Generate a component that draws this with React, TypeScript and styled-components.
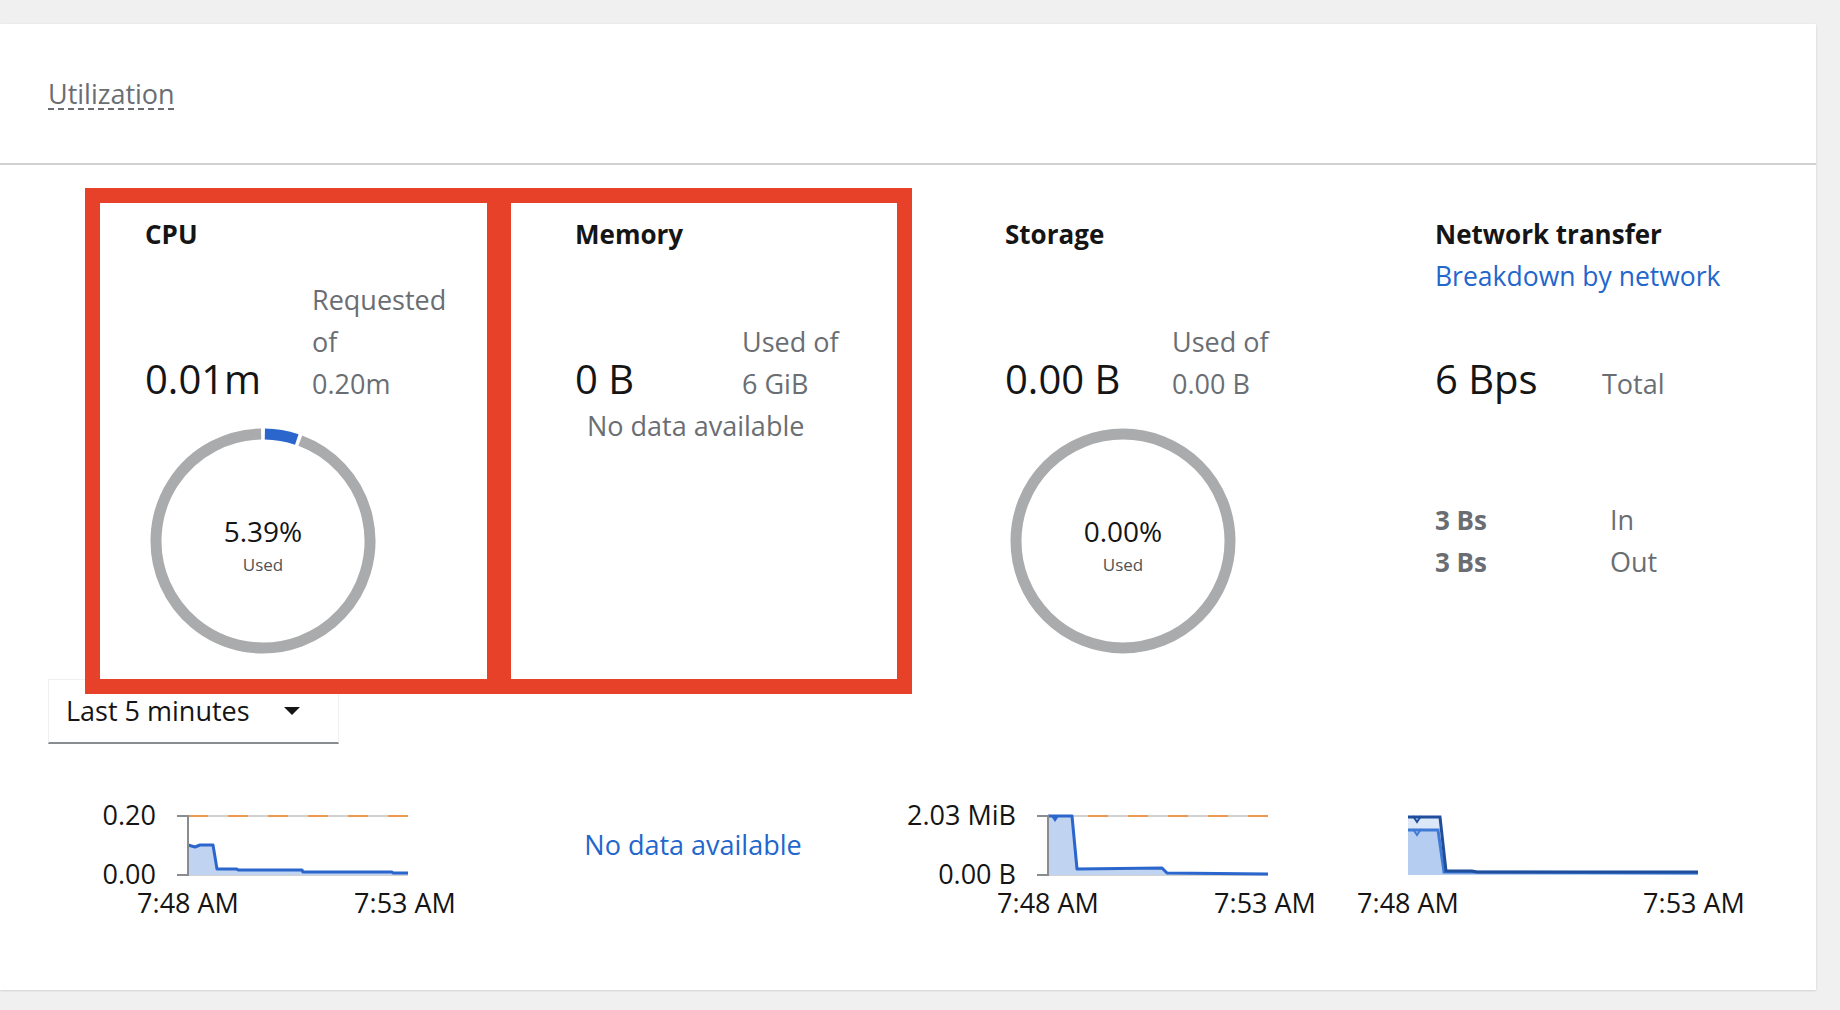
import React from "react";
import styled, { createGlobalStyle } from "styled-components";

const GlobalStyle = createGlobalStyle`
  html, body {
    margin: 0;
    padding: 0;
    background: #f0f0f0;
  }
  body {
    font-family: "Open Sans", "Liberation Sans", sans-serif;
    color: #151515;
  }
`;

const Page = styled.div`
  position: relative;
  width: 1840px;
  height: 1010px;
  padding-top: 24px;
  box-sizing: border-box;
  overflow: hidden;
`;

const Card = styled.section`
  width: 1816px;
  height: 966px;
  background: #fff;
  box-shadow: 0 1px 2px rgba(3, 3, 3, 0.1), 0 0 3px rgba(3, 3, 3, 0.05);
  display: flex;
  flex-direction: column;
`;

const CardHeader = styled.header`
  flex-shrink: 0;
  height: 141px;
  box-sizing: border-box;
  border-bottom: 2px solid #d2d2d2;
  padding-left: 48px;
  display: flex;
  align-items: center;
`;

const CardTitle = styled.span`
  font-size: 27px;
  line-height: 42px;
  color: #6a6e73;
  text-decoration: underline dashed #6a6e73;
  text-decoration-thickness: 2px;
  text-underline-offset: 5px;
`;

const CardBody = styled.div`
  padding: 0 48px;
`;

const MetricsGrid = styled.div`
  display: grid;
  grid-template-columns: repeat(3, 430px) 1fr;
  margin: 48px 0 0 97px;
`;

const Column = styled.div`
  display: flex;
  flex-direction: column;
`;

const TopBlock = styled.div`
  height: 192px;
  display: flex;
  flex-direction: column;
  justify-content: space-between;
`;

const ItemTitle = styled.h3`
  margin: 0;
  font-size: 26px;
  font-weight: 700;
  line-height: 42px;
`;

const Link = styled.a`
  display: block;
  font-size: 26.5px;
  line-height: 42px;
  color: #2366cc;
  text-decoration: none;
`;

const ValueRow = styled.div`
  display: flex;
  align-items: last baseline;
`;

const Value = styled.span`
  width: 167px;
  flex-shrink: 0;
  font-size: 40px;
  line-height: 48px;
`;

const Desc = styled.div`
  width: 150px;
  font-size: 27px;
  line-height: 42px;
  color: #6a6e73;
`;

const Muted = styled.div<{ $indent?: number }>`
  padding-left: ${(p) => p.$indent ?? 0}px;
  font-size: 27px;
  line-height: 42px;
  color: #6a6e73;
`;

const DonutSvg = styled.svg`
  display: block;
  margin-top: 18px;
`;

const InOutGrid = styled.div`
  display: grid;
  grid-template-columns: 175px auto;
  margin-top: 94px;
  line-height: 42px;
  color: #6a6e73;
`;

const InOutValue = styled.span`
  font-size: 26px;
  font-weight: 700;
`;

const InOutLabel = styled.span`
  font-size: 27px;
`;

const Dropdown = styled.button`
  display: flex;
  align-items: center;
  justify-content: space-between;
  width: 291px;
  height: 65px;
  box-sizing: border-box;
  margin-top: 20px;
  padding: 0 38px 0 17px;
  background: #fff;
  border: 1px solid #f0f0f0;
  border-bottom: 2px solid #8a8d90;
  font-family: inherit;
  font-size: 27px;
  line-height: 42px;
  color: #151515;
`;

const ChartsGrid = styled.div`
  display: grid;
  grid-template-columns: repeat(4, 430px);
  margin-top: 49px;
`;

const ChartCell = styled.div`
  height: 135px;
`;

const ChartSvg = styled.svg`
  display: block;
  overflow: visible;
`;

const EmptyChart = styled.a`
  display: block;
  padding-top: 31px;
  text-align: center;
  font-size: 27px;
  line-height: 42px;
  color: #2366cc;
  text-decoration: none;
`;

const Highlight = styled.div<{ $left: number; $width: number }>`
  position: absolute;
  top: 188px;
  left: ${(p) => p.$left}px;
  width: ${(p) => p.$width}px;
  height: 506px;
  box-sizing: border-box;
  border: 15px solid #e8412a;
  pointer-events: none;
`;

const arc = (cx: number, cy: number, r: number, a0: number, a1: number) => {
  const pt = (a: number) => [
    cx + r * Math.sin((a * Math.PI) / 180),
    cy - r * Math.cos((a * Math.PI) / 180),
  ];
  const [x0, y0] = pt(a0);
  const [x1, y1] = pt(a1);
  const large = a1 - a0 > 180 ? 1 : 0;
  return `M${x0} ${y0} A${r} ${r} 0 ${large} 1 ${x1} ${y1}`;
};

const Donut: React.FC<{ percent: number; label: string }> = ({ percent, label }) => {
  const c = 118;
  const r = 107;
  const deg = (percent / 100) * 360;
  const gap = 1;
  return (
    <DonutSvg width={236} height={236} viewBox="0 0 236 236">
      {percent > 0 ? (
        <>
          <path d={arc(c, c, r, deg + gap, 360 - gap)} fill="none" stroke="#aaabac" strokeWidth={11} />
          <path d={arc(c, c, r, gap, deg - gap)} fill="none" stroke="#2b66cc" strokeWidth={11} />
        </>
      ) : (
        <circle cx={c} cy={c} r={r} fill="none" stroke="#aaabac" strokeWidth={11} />
      )}
      <text x={c} y={119} textAnchor="middle" fontSize={28} fill="#151515">
        {label}
      </text>
      <text x={c} y={148} textAnchor="middle" fontSize={17} fill="#4f5255">
        Used
      </text>
    </DonutSvg>
  );
};

type Pt = [number, number];

const line = (pts: Pt[]) => pts.map(([x, y], i) => `${i ? "L" : "M"}${x} ${y}`).join(" ");
const area = (pts: Pt[], base: number) =>
  `${line(pts)} L${pts[pts.length - 1][0]} ${base} L${pts[0][0]} ${base} Z`;

const AxisChart: React.FC<{ top: string; bottom: string; data: Pt[]; marker?: number }> = ({
  top,
  bottom,
  data,
  marker,
}) => (
  <ChartSvg width={430} height={135} viewBox="0 0 430 135" fontSize={27} fill="#151515">
    <line x1={140} y1={23} x2={360} y2={23} stroke="#d2d2d2" strokeWidth={2} />
    <line x1={140} y1={23} x2={360} y2={23} stroke="#ec9a4f" strokeWidth={2} strokeDasharray="20 20" />
    <line x1={140} y1={82} x2={360} y2={82} stroke="#d2d2d2" strokeWidth={2} />
    <path d={area(data, 82)} fill="#c0d3f0" />
    <path d={line(data)} fill="none" stroke="#2b66cc" strokeWidth={3} strokeLinejoin="round" />
    {marker !== undefined && (
      <path d={`M${marker - 4} 23 L${marker} 29 L${marker + 4} 23 Z`} fill="#2b66cc" />
    )}
    <line x1={140} y1={22} x2={140} y2={83} stroke="#8a8d90" strokeWidth={2} />
    <line x1={129} y1={23} x2={140} y2={23} stroke="#8a8d90" strokeWidth={2} />
    <line x1={129} y1={82} x2={140} y2={82} stroke="#8a8d90" strokeWidth={2} />
    <text x={108} y={32} textAnchor="end">{top}</text>
    <text x={108} y={91} textAnchor="end">{bottom}</text>
    <text x={140} y={120} textAnchor="middle">7:48 AM</text>
    <text x={357} y={120} textAnchor="middle">7:53 AM</text>
  </ChartSvg>
);

const NetworkChart: React.FC = () => {
  const outer: Pt[] = [[70, 24], [102, 24], [108, 78], [134, 78], [139, 79], [360, 79]];
  const inner: Pt[] = [[70, 37], [100, 37], [106, 79], [360, 80]];
  return (
    <ChartSvg width={430} height={135} viewBox="0 0 430 135" fontSize={27} fill="#151515">
      <path d={area(outer, 82)} fill="#dce7f8" />
      <path d={area(inner, 82)} fill="#b4cdf0" />
      <path d={line(inner)} fill="none" stroke="#3e7ad6" strokeWidth={3} />
      <path d="M75 36 L79 42 L83 36" fill="none" stroke="#3e7ad6" strokeWidth={2} />
      <path d={line(outer)} fill="none" stroke="#1f4e9c" strokeWidth={3} />
      <path d="M75 23 L79 29 L83 23" fill="none" stroke="#1f4e9c" strokeWidth={2} />
      <text x={70} y={120} textAnchor="middle">7:48 AM</text>
      <text x={356} y={120} textAnchor="middle">7:53 AM</text>
    </ChartSvg>
  );
};

const cpuData: Pt[] = [
  [140, 52], [147, 54], [152, 52], [165, 52], [169, 76], [189, 76],
  [190, 77], [254, 77], [255, 79], [344, 79], [345, 80], [360, 80],
];

const storageData: Pt[] = [
  [140, 23], [164, 23], [169, 76], [254, 75], [259, 80], [360, 81],
];

const App: React.FC = () => {
  return (
    <>
      <GlobalStyle />
      <Page>
        <Card>
          <CardHeader>
            <CardTitle>Utilization</CardTitle>
          </CardHeader>
          <CardBody>
            <MetricsGrid>
              <Column>
                <TopBlock>
                  <ItemTitle>CPU</ItemTitle>
                  <ValueRow>
                    <Value>0.01m</Value>
                    <Desc>
                      <div>Requested of</div>
                      <div>0.20m</div>
                    </Desc>
                  </ValueRow>
                </TopBlock>
                <Donut percent={5.39} label="5.39%" />
              </Column>

              <Column>
                <TopBlock>
                  <ItemTitle>Memory</ItemTitle>
                  <ValueRow>
                    <Value>0 B</Value>
                    <Desc>
                      <div>Used of</div>
                      <div>6 GiB</div>
                    </Desc>
                  </ValueRow>
                </TopBlock>
                <Muted $indent={12}>No data available</Muted>
              </Column>

              <Column>
                <TopBlock>
                  <ItemTitle>Storage</ItemTitle>
                  <ValueRow>
                    <Value>0.00 B</Value>
                    <Desc>
                      <div>Used of</div>
                      <div>0.00 B</div>
                    </Desc>
                  </ValueRow>
                </TopBlock>
                <Donut percent={0} label="0.00%" />
              </Column>

              <Column>
                <TopBlock>
                  <div>
                    <ItemTitle>Network transfer</ItemTitle>
                    <Link href="#">Breakdown by network</Link>
                  </div>
                  <ValueRow>
                    <Value>6 Bps</Value>
                    <Desc>Total</Desc>
                  </ValueRow>
                </TopBlock>
                <InOutGrid>
                  <InOutValue>3 Bs</InOutValue>
                  <InOutLabel>In</InOutLabel>
                  <InOutValue>3 Bs</InOutValue>
                  <InOutLabel>Out</InOutLabel>
                </InOutGrid>
              </Column>
            </MetricsGrid>

            <Dropdown type="button">
              Last 5 minutes
              <svg width={16} height={8} viewBox="0 0 16 8">
                <path d="M0 0 L16 0 L8 8 Z" fill="#151515" />
              </svg>
            </Dropdown>

            <ChartsGrid>
              <ChartCell>
                <AxisChart top="0.20" bottom="0.00" data={cpuData} />
              </ChartCell>
              <ChartCell>
                <EmptyChart href="#">No data available</EmptyChart>
              </ChartCell>
              <ChartCell>
                <AxisChart top="2.03 MiB" bottom="0.00 B" data={storageData} marker={147} />
              </ChartCell>
              <ChartCell>
                <NetworkChart />
              </ChartCell>
            </ChartsGrid>
          </CardBody>
        </Card>
        <Highlight $left={85} $width={417} />
        <Highlight $left={496} $width={416} />
      </Page>
    </>
  );
};

export default App;
